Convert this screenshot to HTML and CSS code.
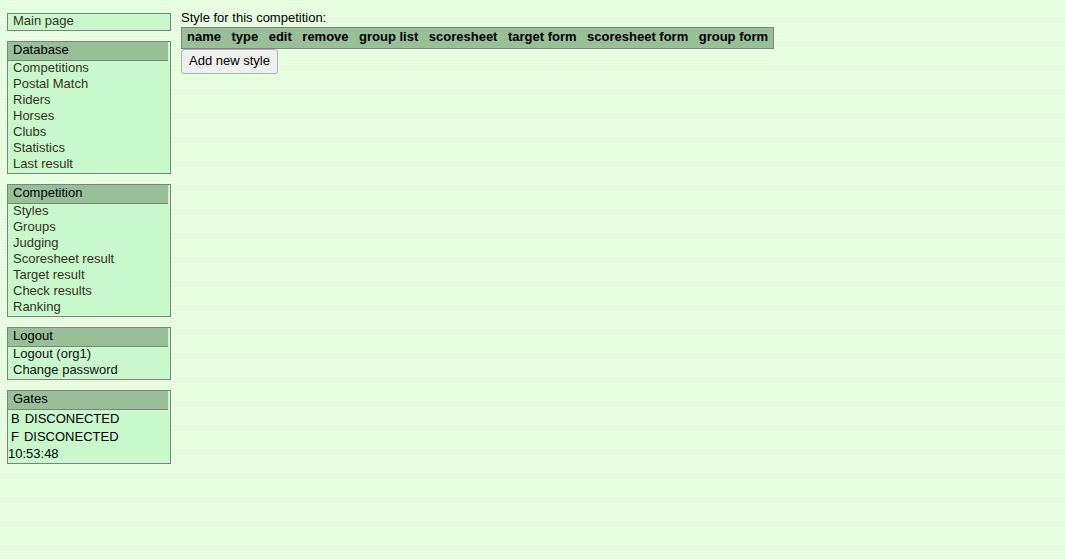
FILE: index.html
```html
<!DOCTYPE html>
<html>
<head>
<meta charset="utf-8">
<title>Styles</title>
<link rel="stylesheet" href="styles.css">
</head>
<body>
<div class="page">
  <div class="sidebar">
    <div class="box">
      <a class="item" href="#">Main page</a>
    </div>
    <div class="box">
      <div class="head">Database</div>
      <a class="item" href="#">Competitions</a>
      <a class="item" href="#">Postal Match</a>
      <a class="item" href="#">Riders</a>
      <a class="item" href="#">Horses</a>
      <a class="item" href="#">Clubs</a>
      <a class="item" href="#">Statistics</a>
      <a class="item" href="#">Last result</a>
    </div>
    <div class="box">
      <div class="head">Competition</div>
      <a class="item" href="#">Styles</a>
      <a class="item" href="#">Groups</a>
      <a class="item" href="#">Judging</a>
      <a class="item" href="#">Scoresheet result</a>
      <a class="item" href="#">Target result</a>
      <a class="item" href="#">Check results</a>
      <a class="item" href="#">Ranking</a>
    </div>
    <div class="box">
      <div class="head">Logout</div>
      <a class="item dark" href="#">Logout (org1)</a>
      <a class="item dark" href="#">Change password</a>
    </div>
    <div class="box">
      <div class="head">Gates</div>
      <div class="gate"><span class="gate-id">B</span><span>DISCONECTED</span></div>
      <div class="gate"><span class="gate-id">F</span><span>DISCONECTED</span></div>
      <div class="clock">10:53:48</div>
    </div>
  </div>
  <div class="main">
    <div class="caption">Style for this competition:</div>
    <table class="styles">
      <tr>
        <th>name</th><th>type</th><th>edit</th><th>remove</th><th>group list</th><th>scoresheet</th><th>target form</th><th>scoresheet form</th><th>group form</th>
      </tr>
    </table>
    <button class="btn">Add new style</button>
  </div>
</div>
</body>
</html>
```
FILE: styles.css
```css
html, body {
  margin: 0;
  padding: 0;
}
body {
  background-color: #e4fddc;
  background-image: repeating-linear-gradient(to bottom, #e2fbda 0px, #e2fbda 1px, #e7ffe0 1px, #e7ffe0 3px);
  font-family: "Liberation Sans", Arial, sans-serif;
  font-size: 13px;
  color: #000;
  min-height: 559px;
}
.page {
  display: flex;
  align-items: flex-start;
  padding: 13px 0 0 7px;
  gap: 10px;
}
.sidebar {
  width: 164px;
  display: flex;
  flex-direction: column;
  gap: 10px;
}
.box {
  border: 1px solid #808080;
  background: #c8f8cc;
  display: flex;
  flex-direction: column;
}
.head {
  background: #98bf98;
  border-bottom: 1px solid #808080;
  margin-right: 2px;
  height: 16px;
  line-height: 16px;
  padding: 0 0 2px 5px;
  color: #000;
}
.item {
  display: block;
  height: 14px;
  line-height: 14px;
  padding: 0 0 2px 5px;
  color: #333322;
  text-decoration: none;
}
.item.dark {
  color: #111;
}
.gate {
  display: flex;
  gap: 5px;
  height: 18px;
  line-height: 18px;
  padding-left: 3px;
}
.clock {
  height: 15px;
  line-height: 15px;
  padding-bottom: 2px;
}
.main {
  display: flex;
  flex-direction: column;
  align-items: flex-start;
  margin-top: -3px;
}
.caption {
  line-height: 16px;
  height: 17px;
}
.styles {
  background: #98bf98;
  border: 1px solid #808080;
  border-spacing: 2px;
}
.styles th {
  padding: 0 5.5px 2px 3px;
  line-height: 14px;
  font-weight: bold;
  text-align: left;
  white-space: nowrap;
}
.styles th:last-child {
  padding-right: 3px;
}
.btn {
  font-family: "Liberation Sans", Arial, sans-serif;
  font-size: 13px;
  color: #000;
  background: #efefef;
  border: 1px solid #b0b0b0;
  border-radius: 3px;
  padding: 0 7px 2px;
  height: 25px;
  margin: 0;
}
```
